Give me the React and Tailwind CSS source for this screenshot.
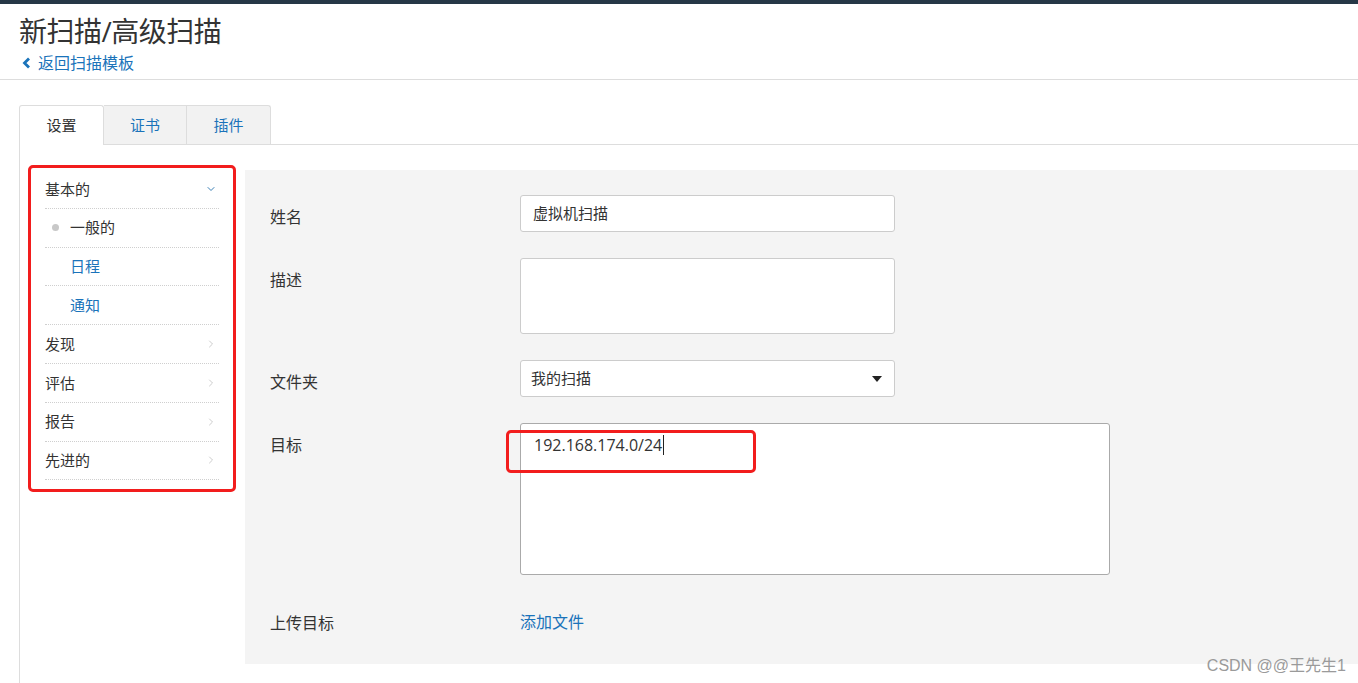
import { ChevronDown, ChevronRight } from 'lucide-react';

const font = { fontFamily: '"Open Sans", "Noto Sans CJK SC", sans-serif' };

const navItems = [
  { label: '基本的', kind: 'head', open: true },
  { label: '一般的', kind: 'sub', active: true },
  { label: '日程', kind: 'sub' },
  { label: '通知', kind: 'sub' },
  { label: '发现', kind: 'head' },
  { label: '评估', kind: 'head' },
  { label: '报告', kind: 'head' },
  { label: '先进的', kind: 'head' },
];

const SideNav = () => (
  <div className="mt-[20px] ml-[8px] w-[208px] h-[327px] border-[3px] border-[#f21d1d] rounded-[5px] pl-[14px] pr-[14px] pt-[2px]">
    {navItems.map((item) => (
      <div
        key={item.label}
        className="h-[38.8px] flex items-center border-b border-dotted border-[#cfcfcf] text-[15px]"
      >
        {item.kind === 'sub' ? (
          <div className="flex items-center pl-[7px]">
            <span className={`w-[7px] h-[7px] rounded-full mr-[11px] ${item.active ? 'bg-[#c8c8c8]' : ''}`} />
            <span className={item.active ? 'text-[#333]' : 'text-[#1a73ba]'}>{item.label}</span>
          </div>
        ) : (
          <div className="flex items-center justify-between w-full text-[#333]">
            <span>{item.label}</span>
            {item.open ? (
              <ChevronDown className="w-[12px] h-[12px] mr-[2px] text-[#3a7fb5]" strokeWidth={2} />
            ) : (
              <ChevronRight className="w-[12px] h-[12px] mr-[2px] text-[#bbb]" strokeWidth={1.5} />
            )}
          </div>
        )}
      </div>
    ))}
  </div>
);

const Row = ({ label, children, className = '' }) => (
  <div className={`flex ${className}`}>
    <div className="w-[250px] shrink-0 pt-[12px] leading-5 text-[16px] text-[#333]">{label}</div>
    {children}
  </div>
);

const Form = () => (
  <div className="mt-[25px] ml-[9px] flex-1 h-[494px] bg-[#f4f4f4] pl-[25px] pt-[25px]">
    <Row label="姓名">
      <div className="w-[375px] h-[37px] bg-white border border-[#ccc] rounded-[3px] flex items-center pl-[12px] text-[15px] text-[#333]">
        虚拟机扫描
      </div>
    </Row>
    <Row label="描述" className="mt-[26px]">
      <div className="w-[375px] h-[76px] bg-white border border-[#ccc] rounded-[3px]" />
    </Row>
    <Row label="文件夹" className="mt-[26px]">
      <div className="w-[375px] h-[37px] bg-white border border-[#ccc] rounded-[3px] flex items-center justify-between pl-[10px] pr-[12px] text-[15px] text-[#333]">
        <span>我的扫描</span>
        <svg width="10" height="6" viewBox="0 0 10 6">
          <path d="M0 0 L10 0 L5 6 Z" fill="#222" />
        </svg>
      </div>
    </Row>
    <Row label="目标" className="mt-[26px]">
      <div className="relative w-[590px] h-[152px] bg-white border border-[#aaa] rounded-[3px] pl-[13px] pt-[11px]">
        <div className="flex items-center text-[16px] text-[#333] leading-5">
          <span>192.168.174.0/24</span>
          <span className="w-px h-[20px] bg-[#222] ml-px" />
        </div>
        <div className="absolute left-[-15px] top-[6px] w-[250px] h-[43px] border-[3px] border-[#f21d1d] rounded-[5px]" />
      </div>
    </Row>
    <Row label="上传目标" className="mt-[26px]">
      <div className="pt-[11px] leading-5 text-[16px] text-[#1a73ba]">添加文件</div>
    </Row>
  </div>
);

export default function App() {
  return (
    <div className="relative w-[1358px] h-[683px] overflow-hidden bg-white" style={font}>
      <div className="h-[4px] bg-[#263746]" />
      <div className="border-b border-[#ddd] pl-[19px] pt-[10px] pb-[6px]">
        <h1 className="text-[28px] leading-[34px] text-[#333] tracking-[-0.5px]">新扫描/高级扫描</h1>
        <div className="mt-[5px] flex items-center text-[16px] leading-5 text-[#1a73ba]">
          {/* bold back chevron */}
          <svg width="9" height="12" viewBox="0 0 9 12" className="ml-[3px] mr-[7px]">
            <path d="M7 1.5 L2.5 6 L7 10.5" fill="none" stroke="#1a73ba" strokeWidth="2.8" strokeLinejoin="miter" />
          </svg>
          <span>返回扫描模板</span>
        </div>
      </div>

      <div className="mt-[25px] pl-[19px]">
        <div className="flex items-start border-b border-[#ddd] h-[40px]">
          <div className="w-[85px] h-[40px] border border-b-0 border-[#ddd] bg-white rounded-t-[3px] flex items-center justify-center text-[15px] text-[#333]">
            设置
          </div>
          <div className="w-[83px] h-[39px] border-t border-r border-[#ddd] bg-[#f2f2f2] flex items-center justify-center text-[15px] text-[#1a73ba]">
            证书
          </div>
          <div className="w-[84px] h-[39px] border-t border-r border-[#ddd] bg-[#f2f2f2] rounded-tr-[3px] flex items-center justify-center text-[15px] text-[#1a73ba]">
            插件
          </div>
        </div>
        <div className="flex border-l border-[#ddd] h-[600px]">
          <SideNav />
          <Form />
        </div>
      </div>

      <div className="absolute right-[12px] bottom-[9px] text-[16px] leading-4 text-[#9a9a9a]" style={{ fontFamily: '"Liberation Sans", "Noto Sans CJK SC", sans-serif' }}>
        CSDN @@王先生1
      </div>
    </div>
  );
}
